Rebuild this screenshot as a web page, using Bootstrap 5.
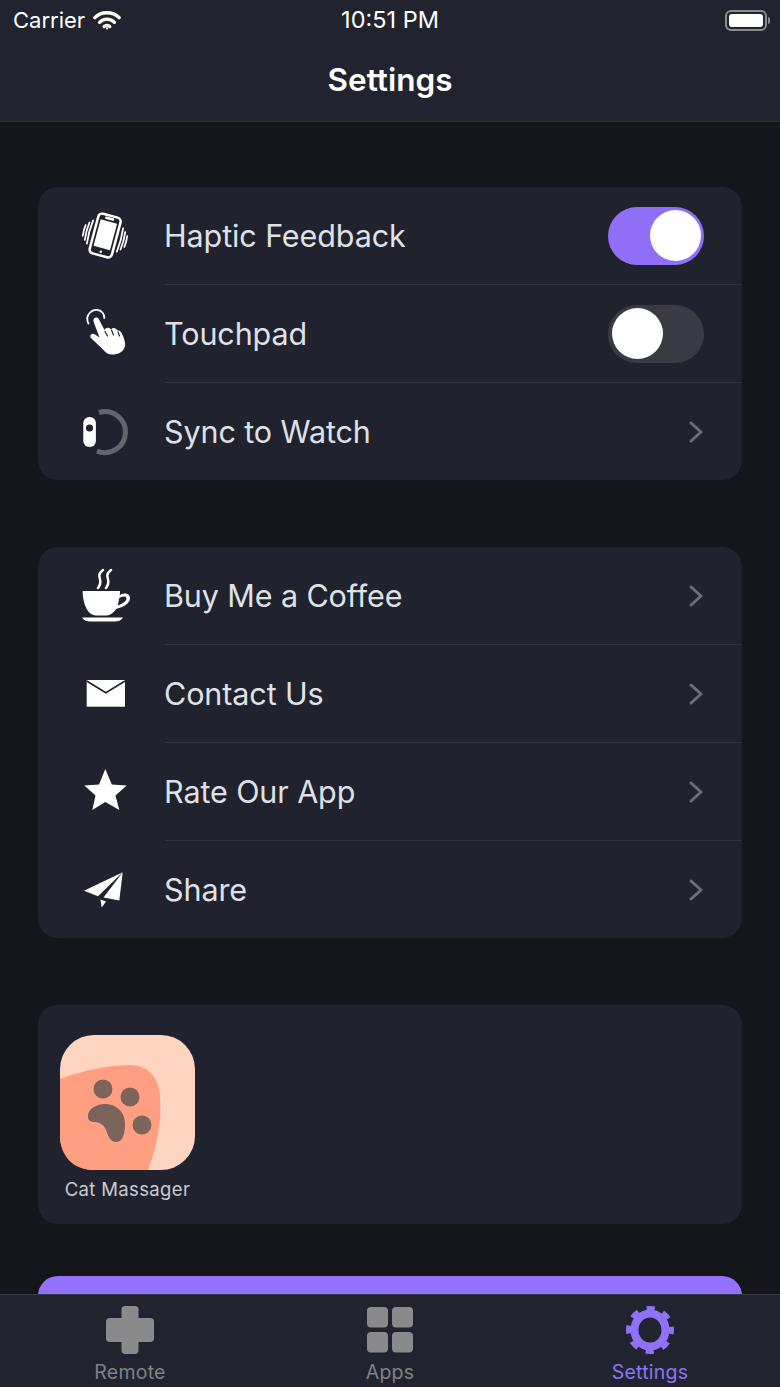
<!DOCTYPE html>
<html lang="en">
<head>
  <meta charset="UTF-8">
  <title>Settings</title>
  <link href="https://cdn.jsdelivr.net/npm/bootstrap@5.3.0/dist/css/bootstrap.min.css" rel="stylesheet">
  <style>
    html, body { height: 100%; }
    body { background: #14161c; font-family: "Inter", "Liberation Sans", sans-serif; color: #fff; overflow: hidden; }
    .phone-shell { height: 1387px; }
    .top-bar { background: #21242e; height: 122px; border-bottom: 1px solid #2c2f39; flex: none; }
    .status-row { height: 40px; padding: 0 10px 0 13px; font-size: 22px; }
    .status-time { font-size: 23.5px; }
    .title-text { font-size: 31.5px; font-weight: 600; line-height: 36px; padding-top: 22px; }
    .battery-box { width: 42px; height: 21px; border: 2px solid #8a8c92; border-radius: 6px; padding: 2px; }
    .battery-fill { background: #fff; border-radius: 3px; height: 100%; }
    .battery-tip { width: 2px; height: 7px; background: #8a8c92; border-radius: 0 2px 2px 0; margin-left: 1px; }
    .page-body { overflow: hidden; padding: 65px 38px 0; gap: 67px; min-height: 0; }
    .set-group { --bs-list-group-bg: #20232e; --bs-list-group-border-width: 0; --bs-list-group-border-radius: 20px; --bs-list-group-color: #dfe1e5; }
    .set-row { height: 98px; padding: 0; }
    .set-row:last-child { height: 97px; }
    .icon-slot { width: 127px; padding-left: 37px; flex: none; }
    .row-main { font-size: 30.5px; padding-right: 38px; border-bottom: 1px solid #30333d; }
    .set-row:last-child .row-main { border-bottom: 0; }
    .row-label { letter-spacing: -.1px; padding-top: 1px; margin-left: -1px; }
    .toggle-track { width: 96px; height: 58px; border-radius: 29px; padding: 4px; background: #3a3b42; }
    .toggle-track.is-on { background: #8f6ff8; justify-content: flex-end; padding-right: 3px; }
    .toggle-knob { width: 51px; height: 51px; border-radius: 50%; background: #fff; }
    .app-card { height: 219px; background: #20232e; border-radius: 20px; padding: 30px 22px 0; flex: none; }
    .app-name { font-size: 18.5px; color: #c9ccd2; width: 135px; text-align: center; margin-top: 6px; white-space: nowrap; letter-spacing: .35px; }
    .buy-btn { margin-top: -15px; height: 80px; background: #9470ff; border: 0; border-radius: 20px; flex: none; width: 100%; }
    .tab-bar { background: #21242e; height: 93px; border-top: 1px solid #383b45; flex: none; }
    .tab-item { width: 260px; color: #808184; font-size: 19.5px; padding-top: 11px; line-height: 24px; letter-spacing: .25px; }
    .tab-item.is-active { color: #8f72f7; }
    .tab-item svg { display: block; margin-bottom: 6px; }
  </style>
</head>
<body>
  <div class="phone-shell d-flex flex-column">
    <header class="top-bar">
      <div class="status-row d-flex align-items-center justify-content-between position-relative">
        <div class="d-flex align-items-center gap-2">
          <span>Carrier</span>
          <svg width="28" height="22" viewBox="0 0 30 22" fill="none" stroke="#fff" stroke-width="3.600" stroke-linecap="round"><path d="M2 8.500C9 1.500 21 1.500 28 8.500"/><path d="M7 13.500C11.500 9 18.500 9 23 13.500"/><path d="M12 18C13.500 16.500 16.500 16.500 18 18"/><circle cx="15" cy="20" r="1.200" fill="#fff" stroke="none"/></svg>
        </div>
        <span class="status-time position-absolute top-50 start-50 translate-middle">10:51 PM</span>
        <div class="d-flex align-items-center">
          <div class="battery-box"><div class="battery-fill"></div></div>
          <div class="battery-tip"></div>
        </div>
      </div>
      <div class="title-text text-center">Settings</div>
    </header>

    <main class="page-body flex-grow-1 d-flex flex-column">
      <ul class="list-group set-group">
        <li class="list-group-item set-row d-flex">
          <div class="icon-slot d-flex align-items-center">
            <svg width="60" height="60" viewBox="0 0 60 60" fill="none" stroke="#fff" stroke-linecap="round">
              <g transform="rotate(15 30 30)">
                <rect x="18.500" y="9" width="23" height="41" rx="4" stroke-width="2.500"/>
                <rect x="21.500" y="15" width="17" height="27.500" fill="#fff" stroke="none"/>
                <path d="M26.500 12H33.500M30 46.300h.01" stroke-width="2.500"/>
                <path d="M14.500 18C13.500 26 13.500 34 14.500 42M11.500 21C10.700 27 10.700 33 11.500 39M8.500 24.500C8 28 8 32 8.500 35.500M45.500 18C46.500 26 46.500 34 45.500 42M48.500 21C49.300 27 49.300 33 48.500 39M51.500 24.500C52 28 52 32 51.500 35.500" stroke-width="1.800"/>
              </g>
            </svg>
          </div>
          <div class="row-main flex-grow-1 d-flex align-items-center justify-content-between">
            <span class="row-label">Haptic Feedback</span>
            <div class="toggle-track is-on d-flex align-items-center"><div class="toggle-knob"></div></div>
          </div>
        </li>
        <li class="list-group-item set-row d-flex">
          <div class="icon-slot d-flex align-items-center">
            <svg width="60" height="60" viewBox="0 0 60 60" fill="none">
              <path d="M13.500 19.500C9.500 12 16 5.500 22 5.800C26.500 6 29.500 10 29.300 14" stroke="#fff" stroke-width="1.800" stroke-linecap="round"/>
              <path d="M18.500 17.500C17.500 13.500 22.500 12 24 15.500L29.500 26C31 23 34.500 23 36 25.500C37.500 23 41 23.500 42.500 26.500C44.500 26 46 27.500 47 30C49.500 35 50.500 39 50 42C49 48 43 50.500 37 50.500C33 50.500 30.500 48.500 28 45.500L16 34C14 31.500 17 28.500 20 30.500L24.500 33.500Z" fill="#fff"/>
              <path d="M30 27.500L32.500 32M36.500 26L38.500 31M43 28L44.500 32" stroke="#20232e" stroke-width="1.200" stroke-linecap="round"/>
            </svg>
          </div>
          <div class="row-main flex-grow-1 d-flex align-items-center justify-content-between">
            <span class="row-label">Touchpad</span>
            <div class="toggle-track d-flex align-items-center"><div class="toggle-knob"></div></div>
          </div>
        </li>
        <li class="list-group-item set-row d-flex">
          <div class="icon-slot d-flex align-items-center">
            <svg width="60" height="60" viewBox="0 0 60 60" fill="none">
              <path d="M24 10.500A20.500 20.500 0 1 1 22 49" stroke="#63656c" stroke-width="5"/>
              <rect x="8.300" y="15" width="12.600" height="30" rx="6" fill="#fff"/>
              <circle cx="14.500" cy="26" r="3.600" fill="#20232e"/>
            </svg>
          </div>
          <div class="row-main flex-grow-1 d-flex align-items-center justify-content-between">
            <span class="row-label">Sync to Watch</span>
            <svg width="16" height="24" viewBox="0 0 16 24" fill="none" stroke="#6b6e76" stroke-width="3" stroke-linecap="round" stroke-linejoin="round"><path d="M3 3L13 12L3 21"/></svg>
          </div>
        </li>
      </ul>

      <ul class="list-group set-group">
        <li class="list-group-item set-row d-flex">
          <div class="icon-slot d-flex align-items-center">
            <svg width="60" height="60" viewBox="0 0 60 60" fill="none">
              <path d="M28 4C19 11 30 13 23 22M36 4C27 11 38 13 31 22" stroke="#fff" stroke-width="2.500" stroke-linecap="round"/>
              <path d="M7.700 25H45C45 27 45 28 44.600 29.500C47 26.500 55 26.500 55 32C55 38 47 41.500 41 43C38.500 47 35 49.500 31 49.500H21C13 49.500 7.700 38 7.700 25Z" fill="#fff"/>
              <path d="M44 32.500C46 30 51.500 29.500 51.500 32.500C51.500 35.500 46.500 38 42.500 39.500C43.500 37 43.800 35 44 32.500Z" fill="#20232e"/>
              <path d="M7 51.500H48C46 54.500 43 55.500 40 55.500H15C12 55.500 9 54.500 7 51.500Z" fill="#fff"/>
            </svg>
          </div>
          <div class="row-main flex-grow-1 d-flex align-items-center justify-content-between">
            <span class="row-label">Buy Me a Coffee</span>
            <svg width="16" height="24" viewBox="0 0 16 24" fill="none" stroke="#6b6e76" stroke-width="3" stroke-linecap="round" stroke-linejoin="round"><path d="M3 3L13 12L3 21"/></svg>
          </div>
        </li>
        <li class="list-group-item set-row d-flex">
          <div class="icon-slot d-flex align-items-center">
            <svg width="60" height="60" viewBox="0 0 60 60" fill="none">
              <rect x="11.700" y="16" width="38.300" height="26.700" fill="#fff"/>
              <path d="M11.700 17L30.800 28.700L50 17" stroke="#20232e" stroke-width="1.600"/>
            </svg>
          </div>
          <div class="row-main flex-grow-1 d-flex align-items-center justify-content-between">
            <span class="row-label">Contact Us</span>
            <svg width="16" height="24" viewBox="0 0 16 24" fill="none" stroke="#6b6e76" stroke-width="3" stroke-linecap="round" stroke-linejoin="round"><path d="M3 3L13 12L3 21"/></svg>
          </div>
        </li>
        <li class="list-group-item set-row d-flex">
          <div class="icon-slot d-flex align-items-center">
            <svg width="60" height="60" viewBox="0 0 60 60"><path d="M30.300 7L36.800 22.500L51.700 23.500L40.500 33.500L44.300 48L30.300 40L17.300 48L20.500 33.500L9.300 23.500L24 22.500Z" fill="#fff"/></svg>
          </div>
          <div class="row-main flex-grow-1 d-flex align-items-center justify-content-between">
            <span class="row-label">Rate Our App</span>
            <svg width="16" height="24" viewBox="0 0 16 24" fill="none" stroke="#6b6e76" stroke-width="3" stroke-linecap="round" stroke-linejoin="round"><path d="M3 3L13 12L3 21"/></svg>
          </div>
        </li>
        <li class="list-group-item set-row d-flex">
          <div class="icon-slot d-flex align-items-center">
            <svg width="60" height="60" viewBox="0 0 60 60" fill="#fff">
              <path d="M47.700 12.300L9 30.700L23 36.300Z"/>
              <path d="M47.700 12.300L28.500 37.500L44.300 40.500Z"/>
              <path d="M25.500 39.500L26.700 47.500L31 41.500Z"/>
            </svg>
          </div>
          <div class="row-main flex-grow-1 d-flex align-items-center justify-content-between">
            <span class="row-label">Share</span>
            <svg width="16" height="24" viewBox="0 0 16 24" fill="none" stroke="#6b6e76" stroke-width="3" stroke-linecap="round" stroke-linejoin="round"><path d="M3 3L13 12L3 21"/></svg>
          </div>
        </li>
      </ul>

      <div class="app-card">
        <svg class="d-block" width="135" height="135" viewBox="0 0 135 135">
          <rect width="135" height="135" rx="34" fill="#ffd5c2"/>
          <path d="M0 44C25 35 50 30 70 30C88 30 98 42 100 60C102 85 97 112 88 135H34C12 135 0 120 0 100Z" fill="#ff9e80"/>
          <g fill="#7b6459">
            <circle cx="43" cy="54" r="9.500"/>
            <circle cx="70" cy="62" r="9.500"/>
            <circle cx="82" cy="90" r="9.500"/>
            <path d="M28 80C29 73 37 69 45 69C57 69 65 78 65 88C65 96 64 107 56 107C50 107 48 100 46 95C43 88 38 87 33 87C29 86 27.500 84 28 80Z"/>
          </g>
        </svg>
        <div class="app-name">Cat Massager</div>
      </div>

      <button class="btn buy-btn" type="button" aria-label="Action"></button>
    </main>

    <nav class="tab-bar d-flex justify-content-center">
      <div class="tab-item d-flex flex-column align-items-center">
        <svg width="48" height="48" viewBox="0 0 48 48"><path d="M19 0H29C31 0 32.500 1.500 32.500 3.500V12H44.500C46.500 12 48 13.500 48 15.500V32.500C48 34.500 46.500 36 44.500 36H32.500V44.500C32.500 46.500 31 48 29 48H19C17 48 15.500 46.500 15.500 44.500V36H3.500C1.500 36 0 34.500 0 32.500V15.500C0 13.500 1.500 12 3.500 12H15.500V3.500C15.500 1.500 17 0 19 0Z" fill="#8a8a8c"/></svg>
        <span>Remote</span>
      </div>
      <div class="tab-item d-flex flex-column align-items-center">
        <svg width="48" height="48" viewBox="0 0 48 48" fill="#8a8a8c">
          <rect x="1" y="1" width="21" height="20.500" rx="4"/><rect x="26" y="1" width="21" height="20.500" rx="4"/>
          <rect x="1" y="26" width="21" height="20.500" rx="4"/><rect x="26" y="26" width="21" height="20.500" rx="4"/>
        </svg>
        <span>Apps</span>
      </div>
      <div class="tab-item is-active d-flex flex-column align-items-center">
        <svg width="48" height="48" viewBox="0 0 48 48" fill="none" stroke="#8f72f7">
          <ellipse cx="24" cy="24" rx="15.500" ry="16.500" stroke-width="8"/>
          <circle cx="24" cy="24" r="21" stroke-width="6" stroke-dasharray="8 8.490" stroke-dashoffset="4"/>
        </svg>
        <span>Settings</span>
      </div>
    </nav>
  </div>
  <script src="https://cdn.jsdelivr.net/npm/bootstrap@5.3.0/dist/js/bootstrap.bundle.min.js"></script>
</body>
</html>
